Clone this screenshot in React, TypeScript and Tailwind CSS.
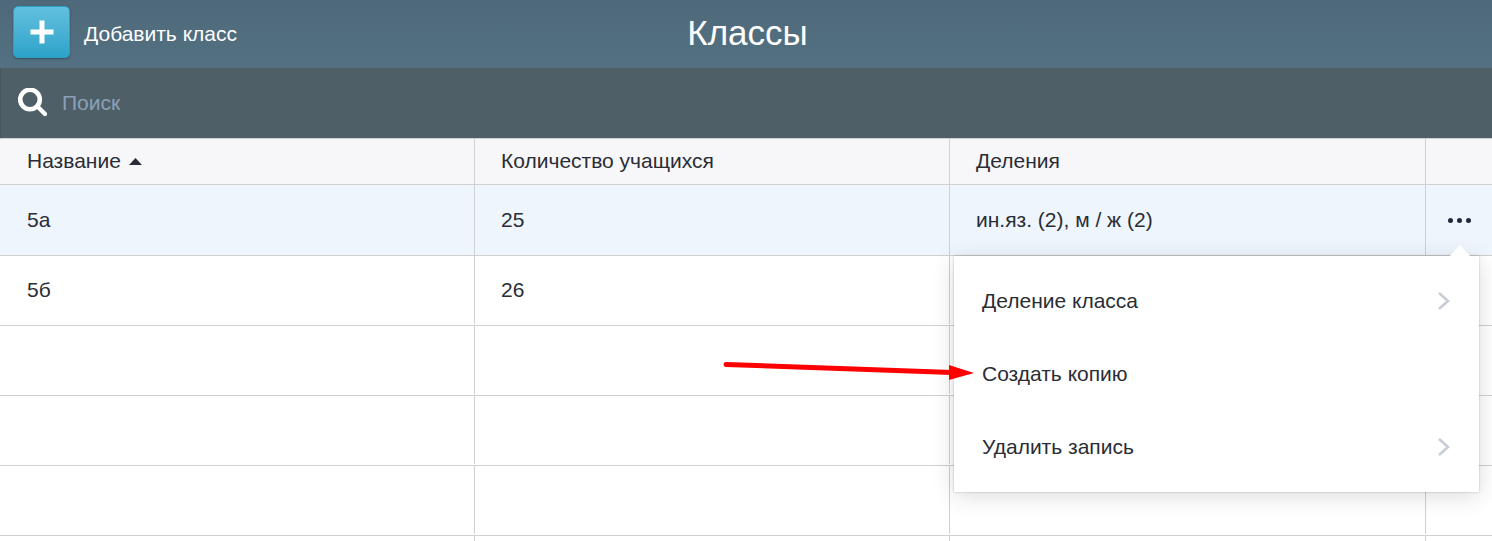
const rows = [
  { name: "5а", count: "25", groups: "ин.яз. (2), м / ж (2)", active: true },
  { name: "5б", count: "26", groups: "" },
  { name: "", count: "", groups: "" },
  { name: "", count: "", groups: "" },
  { name: "", count: "", groups: "" },
  { name: "", count: "", groups: "" },
];

const Chevron = () => (
  <svg width="14" height="20" viewBox="0 0 14 20" fill="none" className="text-[#c9ced6]">
    <path d="M2 2l9 8-9 8" stroke="currentColor" strokeWidth="2.6" />
  </svg>
);

const App = () => {
  return (
    <div className="relative h-[541px] w-[1492px] overflow-hidden bg-white font-['Liberation_Sans',Arial,sans-serif] text-[21px] text-[#2a2d35]">
      <header className="relative flex h-[68px] items-center bg-gradient-to-b from-[#4e6979] to-[#537183] pl-[13px]">
        <button className="mb-[4px] flex h-[52px] w-[57px] items-center justify-center rounded-[5px] border border-[#2f9fc4] bg-gradient-to-b from-[#62c0de] to-[#2ba3c9] shadow-[0_1px_2px_rgba(0,0,0,0.3)]">
          <svg width="24" height="24" viewBox="0 0 24 24" fill="white">
            <path d="M9.5 0.5h5v9h9v5h-9v9h-5v-9h-9v-5h9z" />
          </svg>
        </button>
        <span className="ml-[14px] text-white">Добавить класс</span>
        <h1 className="absolute inset-x-0 top-[12px] pl-[3px] text-center text-[35px] leading-[42px] text-white">Классы</h1>
      </header>

      <div className="flex h-[70px] items-center border-l border-[#46555e] bg-[#4f5f68] pl-[17px]">
        <svg width="30" height="30" viewBox="0 0 30 30" fill="none" stroke="white">
          <circle cx="12" cy="11.5" r="9.8" strokeWidth="4.6" />
          <path d="M20 19l7 7" strokeWidth="4.2" strokeLinecap="round" />
        </svg>
        <span className="ml-[14px] text-[#8ba0b8]">Поиск</span>
      </div>

      <div className="grid h-[47px] grid-cols-[475px_475px_476px_1fr] border-y border-[#d0d0d0] bg-[#f7f7fa]">
        <div className="flex items-center gap-[8px] border-r border-[#d0d0d0] pb-[1px] pl-[27px]">
          Название
          <svg width="13" height="7" viewBox="0 0 13 7" fill="#2a2d35">
            <path d="M6.5 0L13 7H0z" />
          </svg>
        </div>
        <div className="flex items-center border-r border-[#d0d0d0] pb-[1px] pl-[26px]">Количество учащихся</div>
        <div className="flex items-center border-r border-[#d0d0d0] pb-[1px] pl-[26px]">Деления</div>
        <div />
      </div>

      {rows.map((row, i) => (
        <div
          key={i}
          className={`grid grid-cols-[475px_475px_476px_1fr] border-b border-[#d0d0d0] ${row.active ? "h-[71px] bg-[#eef5fd]" : "h-[70px] bg-white pb-[1px]"}`}
        >
          <div className="flex items-center border-r border-[#d0d0d0] pl-[27px]">{row.name}</div>
          <div className="flex items-center border-r border-[#d0d0d0] pl-[26px]">{row.count}</div>
          <div className="flex items-center border-r border-[#d0d0d0] pl-[26px]">{row.groups}</div>
          <div className="flex items-center justify-center gap-[4px] pl-[1px]">
            {row.active && (
              <>
                <span className="h-[5px] w-[5px] rounded-full bg-[#1f2a3c]" />
                <span className="h-[5px] w-[5px] rounded-full bg-[#1f2a3c]" />
                <span className="h-[5px] w-[5px] rounded-full bg-[#1f2a3c]" />
              </>
            )}
          </div>
        </div>
      ))}

      {/* dropdown menu */}
      <div className="absolute left-[954px] top-[256px] w-[525px] bg-white pb-[9px] pt-[8px] shadow-[0_0_2px_rgba(0,0,0,0.25),0_4px_22px_rgba(0,0,0,0.14)]">
        <div className="absolute right-[9px] top-[-11px] h-0 w-0 border-x-[10px] border-b-[11px] border-x-transparent border-b-white" />
        <div className="flex h-[73px] items-center justify-between pl-[28px] pr-[28px]">
          Деление класса
          <Chevron />
        </div>
        <div className="flex h-[73px] items-center pl-[28px]">Создать копию</div>
        <div className="flex h-[73px] items-center justify-between pl-[28px] pr-[28px]">
          Удалить запись
          <Chevron />
        </div>
      </div>

      {/* red annotation arrow */}
      <svg className="absolute left-[720px] top-[355px]" width="260" height="30" viewBox="0 0 260 30">
        <path d="M6 9.5L232 17.5" stroke="#fe0000" strokeWidth="5" strokeLinecap="round" />
        <path d="M229 10L254 18L229 25z" fill="#fe0000" />
      </svg>
    </div>
  );
};

export default App;
